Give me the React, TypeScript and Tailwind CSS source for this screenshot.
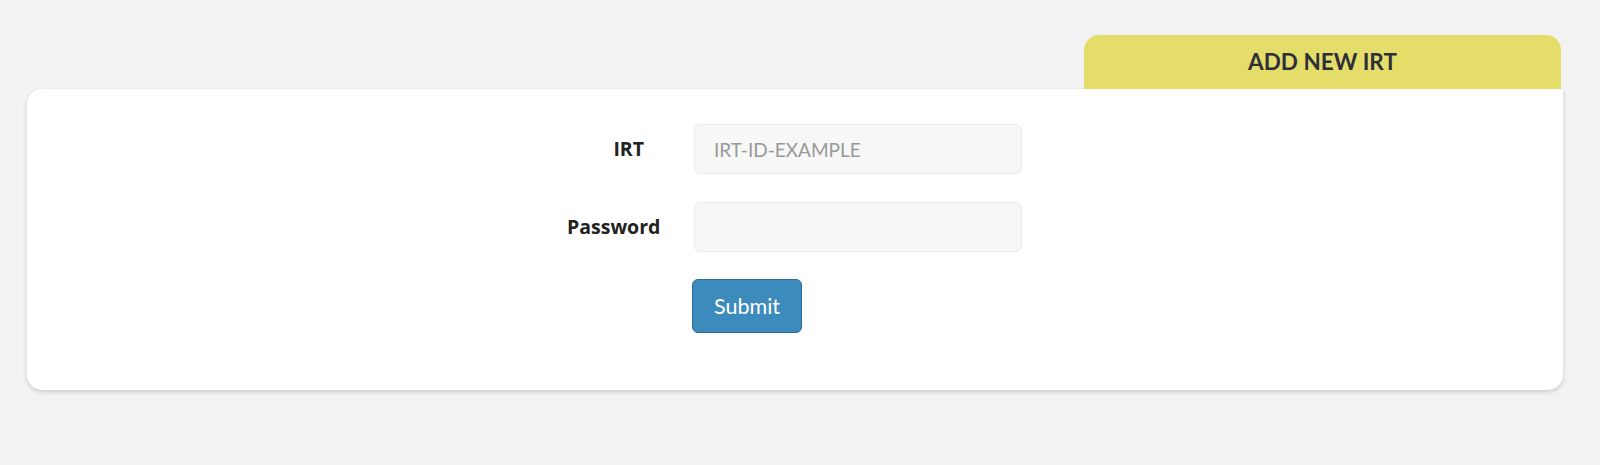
import React, { useState } from "react";

const App = () => {
  const [irt, setIrt] = useState("");
  const [password, setPassword] = useState("");

  return (
    <div
      className="min-h-[465px] w-full bg-[#f2f2f2] pt-[35px] pl-[27px]"
      style={{ fontFamily: "Lato, 'Open Sans', sans-serif" }}
    >
      <div className="w-[1536px]">
        {/* tab */}
        <div className="flex justify-end pr-[2px]">
          <div className="flex h-[54px] w-[477px] items-center justify-center rounded-t-[15px] bg-[#e5dd69]">
            <span className="text-[22.5px] font-bold text-[#2f2f3a]">
              ADD NEW IRT
            </span>
          </div>
        </div>

        {/* card */}
        <div className="rounded-[15px] rounded-tr-none bg-white pt-[35px] pb-[57px] pl-[540px] shadow-[0_2px_4px_rgba(0,0,0,0.16)]">
          <form
            className="flex flex-col gap-[28px]"
            onSubmit={(e) => e.preventDefault()}
          >
            <div className="flex items-center gap-[50px]">
              <label className="w-[77px] text-right font-['Open_Sans',sans-serif] text-[19.5px] font-bold text-[#222]">
                IRT
              </label>
              <input
                type="text"
                value={irt}
                onChange={(e) => setIrt(e.target.value)}
                placeholder="IRT-ID-EXAMPLE"
                className="h-[50px] w-[328px] rounded-[6px] border border-[#ebebeb] bg-[#f7f7f7] px-[19px] text-[19px] text-[#333] outline-none placeholder:text-[#999]"
              />
            </div>
            <div className="flex items-center gap-[50px]">
              <label className="w-[77px] whitespace-nowrap text-left font-['Open_Sans',sans-serif] text-[19.5px] font-bold text-[#222]">
                Password
              </label>
              <input
                type="password"
                value={password}
                onChange={(e) => setPassword(e.target.value)}
                className="h-[50px] w-[328px] rounded-[6px] border border-[#ebebeb] bg-[#f7f7f7] px-[19px] text-[19px] text-[#333] outline-none"
              />
            </div>
            <div className="-mt-[1px] flex pl-[125px]">
              <button
                type="submit"
                className="h-[54px] w-[110px] rounded-[6px] border border-[#2b6d98] bg-[#3d8bbd] text-[21.5px] text-white"
              >
                Submit
              </button>
            </div>
          </form>
        </div>
      </div>
    </div>
  );
};

export default App;
